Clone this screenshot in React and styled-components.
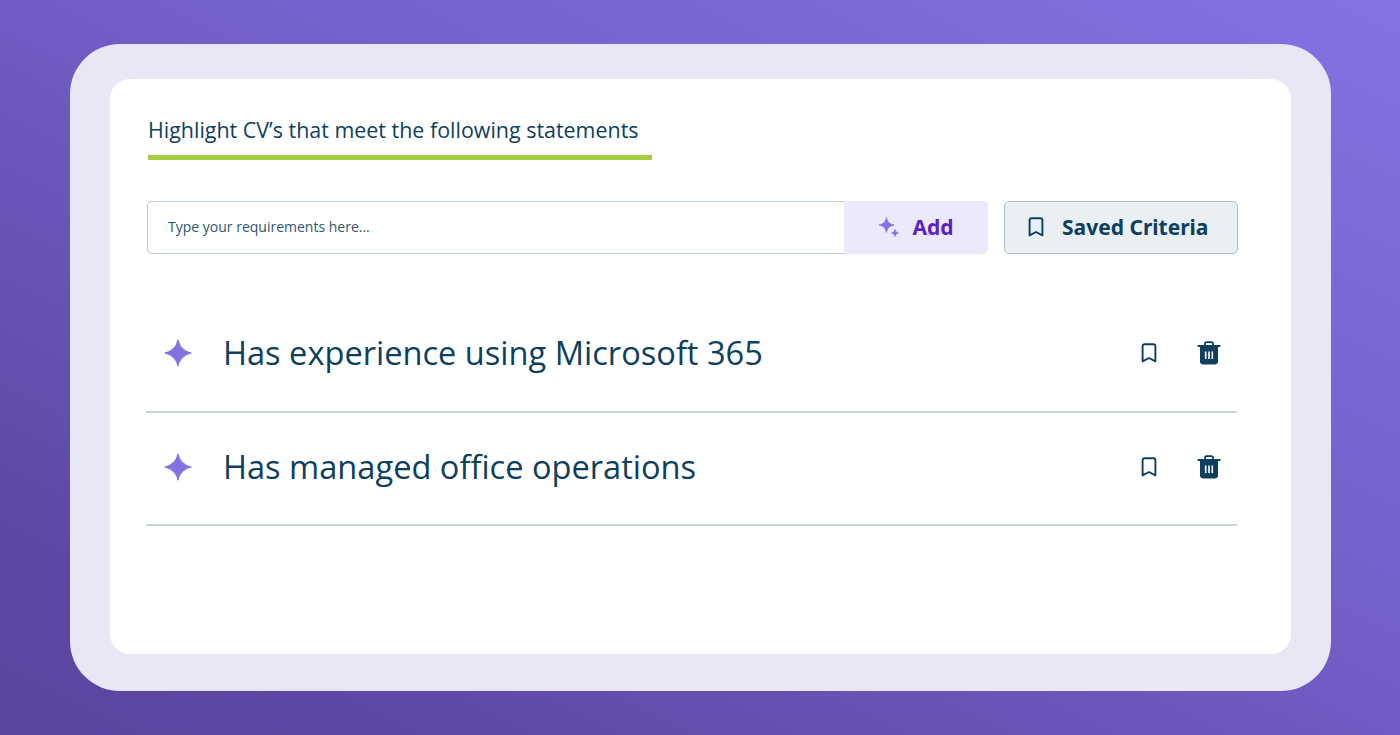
import React from 'react';
import styled, { createGlobalStyle } from 'styled-components';

const GlobalStyle = createGlobalStyle`
  html, body { margin: 0; padding: 0; height: 100%; }
  body { font-family: "Open Sans", "Noto Sans", sans-serif; color: #0e3f5e; }
  * { box-sizing: border-box; }
`;

const Sparkle = ({ size = 28, color = '#8470e0' }) => (
  <svg width={size} height={size} viewBox="0 0 28 28" fill={color}>
    <path d="M14 1 C15.2 7 18 11.8 27 14 C18 16.2 15.2 21 14 27 C12.8 21 10 16.2 1 14 C10 11.8 12.8 7 14 1 Z" stroke={color} strokeWidth="1.2" strokeLinejoin="round" />
  </svg>
);

const AddSparkle = () => (
  <svg width="22" height="22" viewBox="0 0 22 22" fill="#8470e0" stroke="#8470e0" strokeWidth="0.8" strokeLinejoin="round">
    <path d="M8.5 1.5 C9.2 5.6 11.2 8 16 9 C11.2 10 9.2 12.4 8.5 16.5 C7.8 12.4 5.8 10 1 9 C5.8 8 7.8 5.6 8.5 1.5 Z" />
    <path d="M17 13.5 C17.4 15.6 18.4 16.6 20.5 17 C18.4 17.4 17.4 18.4 17 20.5 C16.6 18.4 15.6 17.4 13.5 17 C15.6 16.6 16.6 15.6 17 13.5 Z" />
  </svg>
);

const BookmarkIcon = ({ size = 20 }) => (
  <svg width={size} height={size} viewBox="0 0 20 20" fill="none" stroke="#0e3f5e" strokeWidth="1.9" strokeLinejoin="round">
    <path d="M3.6 3.2 C3.6 2 4.4 1.2 5.6 1.2 H14.4 C15.6 1.2 16.4 2 16.4 3.2 V18.4 L10 15 L3.6 18.4 Z" />
  </svg>
);

const TrashIcon = () => (
  <svg width="24" height="24" viewBox="0 0 24 24">
    <path d="M8 4.4 V2.8 C8 1.8 8.7 1.1 9.7 1.1 H14.3 C15.3 1.1 16 1.8 16 2.8 V4.4" fill="none" stroke="#0e3f5e" strokeWidth="1.8" />
    <rect x="0.4" y="4" width="23.2" height="2" rx="1" fill="#0e3f5e" />
    <path d="M3 5.4 H21 V20.6 C21 22.4 19.9 23.4 18.2 23.4 H5.8 C4.1 23.4 3 22.4 3 20.6 Z" fill="#0e3f5e" />
    <path d="M8.7 10.5 V18 M12 10.5 V18 M15.3 10.5 V18" stroke="#ffffff" strokeWidth="1.6" />
  </svg>
);

const criteria = ['Has experience using Microsoft 365', 'Has managed office operations'];

export default function App() {
  return (
    <>
      <GlobalStyle />
      <Page>
        <OuterCard>
          <InnerCard>
            <Heading>Highlight CV’s that meet the following statements</Heading>
            <Toolbar>
              <InputGroup>
                <FakeInput>Type your requirements here...</FakeInput>
                <AddButton>
                  <AddSparkle />
                  Add
                </AddButton>
              </InputGroup>
              <SavedButton>
                <BookmarkIcon />
                Saved Criteria
              </SavedButton>
            </Toolbar>
            <List>
              {criteria.map((text) => (
                <Row key={text}>
                  <RowIcon>
                    <Sparkle />
                  </RowIcon>
                  <RowText>{text}</RowText>
                  <RowActions>
                    <IconButton>
                      <BookmarkIcon />
                    </IconButton>
                    <IconButton>
                      <TrashIcon />
                    </IconButton>
                  </RowActions>
                </Row>
              ))}
            </List>
          </InnerCard>
        </OuterCard>
      </Page>
    </>
  );
}

const Page = styled.div`
  width: 1400px;
  height: 735px;
  overflow: hidden;
  padding: 44px 69px 44px 70px;
  background: linear-gradient(207deg, #8571e2 0%, #7561cb 40%, #5d49a3 85%, #5a469f 100%);
`;

const OuterCard = styled.div`
  height: 647px;
  padding: 35px 40px 37px;
  border-radius: 50px;
  background: #e9e6f5;
`;

const InnerCard = styled.div`
  height: 575px;
  padding: 35px 53px 0 37px;
  border-radius: 20px;
  background: #ffffff;
`;

const Heading = styled.h2`
  margin: 0 0 41px 1px;
  width: 504px;
  height: 46px;
  border-bottom: 5px solid #a6ce44;
  font-size: 21.45px;
  line-height: 32px;
  font-weight: 400;
  white-space: nowrap;
  color: #0e3f5e;
`;

const Toolbar = styled.div`
  display: flex;
  gap: 16px;
  height: 53px;
`;

const InputGroup = styled.div`
  display: flex;
  width: 841px;
`;

const FakeInput = styled.div`
  flex: 1;
  display: flex;
  align-items: center;
  padding: 0 0 2px 20px;
  border: 1.5px solid #bccdd8;
  border-right: none;
  border-radius: 5px 0 0 5px;
  font-size: 14px;
  color: #2f5570;
`;

const AddButton = styled.div`
  display: flex;
  align-items: center;
  justify-content: center;
  gap: 12px;
  width: 144px;
  padding: 0 0 2px 0;
  border-radius: 0 5px 5px 0;
  background: #ede9fc;
  font-family: "Noto Sans", sans-serif;
  font-size: 21px;
  font-weight: 700;
  color: #5a22c0;
`;

const SavedButton = styled.div`
  display: flex;
  align-items: center;
  gap: 16px;
  width: 234px;
  padding: 0 0 2px 21px;
  border: 1.5px solid #a9c2cf;
  border-radius: 5px;
  background: #e9eff2;
  font-family: "Noto Sans", sans-serif;
  font-size: 21px;
  font-weight: 700;
  color: #0e3f5e;
`;

const List = styled.div`
  margin: 45px 1px 0 -1px;
`;

const Row = styled.div`
  display: flex;
  align-items: center;
  height: 113.5px;
  padding: 0 16px 4px 18px;
  border-bottom: 2px solid #c9d8de;

  &:last-child {
    padding-bottom: 2px;
  }
`;

const RowIcon = styled.div`
  display: flex;
  width: 59px;
`;

const RowText = styled.div`
  flex: 1;
  font-size: 32.6px;
  line-height: 44px;
  color: #0e3f5e;
  white-space: nowrap;
`;

const RowActions = styled.div`
  display: flex;
  align-items: center;
  gap: 36px;
`;

const IconButton = styled.div`
  display: flex;
  align-items: center;
  justify-content: center;
  width: 24px;
  height: 24px;
`;
